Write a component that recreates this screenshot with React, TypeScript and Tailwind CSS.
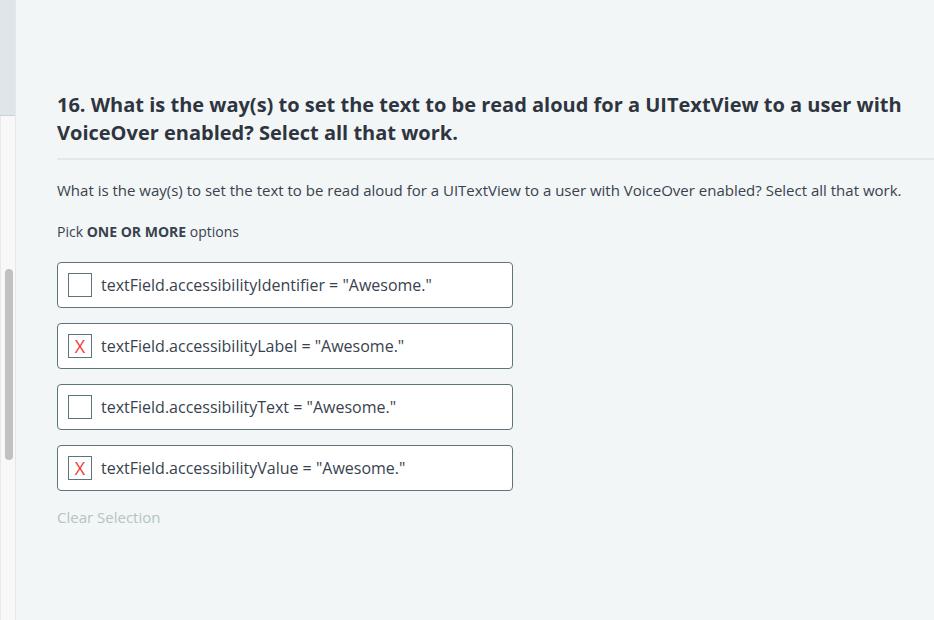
const options = [
  { text: 'textField.accessibilityIdentifier = "Awesome."', checked: false },
  { text: 'textField.accessibilityLabel = "Awesome."', checked: true },
  { text: 'textField.accessibilityText = "Awesome."', checked: false },
  { text: 'textField.accessibilityValue = "Awesome."', checked: true },
]

function Option({ text, checked }: { text: string; checked: boolean }) {
  return (
    <div className="flex h-[46px] w-[456px] items-center rounded-[4px] border border-[#5d7479] bg-white pl-[10px]">
      <div className="flex h-[24px] w-[24px] items-center justify-center border border-[#5d7479] bg-white">
        {checked && <span className="text-[18px] leading-none text-[#f23b3b]">X</span>}
      </div>
      <span className="ml-[9px] text-[16px] text-[#39424e]">{text}</span>
    </div>
  )
}

export default function App() {
  return (
    <div className="flex h-[620px] w-[934px] overflow-hidden" style={{ fontFamily: '"Open Sans", "Noto Sans", sans-serif' }}>
      <div className="flex w-[16px] flex-col border-r border-[#e4e8ea]">
        <div className="h-[116px] border-b border-[#c9d2d6] bg-[#dfe6e9]" />
        <div className="flex-1 border-l border-[#e9e9e9] bg-[#f8f8f8] pl-[4px] pt-[153px]">
          <div className="h-[191px] w-[8px] rounded-full bg-[#c1c1c1]" />
        </div>
      </div>
      <div className="flex-1 bg-[#f2f6f6] pl-[41px] pt-[91px]">
        <h1 className="pr-[30px] text-[20px] font-bold leading-[28px] text-[#2f3540]">
          16. What is the way(s) to set the text to be read aloud for a UITextView to a user with VoiceOver enabled? Select all that work.
        </h1>
        <div className="mt-[11px] h-[2px] bg-[#e3e8ea]" />
        <p className="mt-[20px] text-[15px] leading-[20px] text-[#39424e]">
          What is the way(s) to set the text to be read aloud for a UITextView to a user with VoiceOver enabled? Select all that work.
        </p>
        <p className="mt-[22px] text-[14px] leading-[20px] text-[#39424e]">
          Pick <b className="font-bold">ONE OR MORE</b> options
        </p>
        <div className="mt-[20px] flex flex-col gap-[15px]">
          {options.map((o) => (
            <Option key={o.text} text={o.text} checked={o.checked} />
          ))}
        </div>
        <div className="mt-[16px] text-[15px] leading-[20px] text-[#b4c3c5]">Clear Selection</div>
      </div>
    </div>
  )
}
